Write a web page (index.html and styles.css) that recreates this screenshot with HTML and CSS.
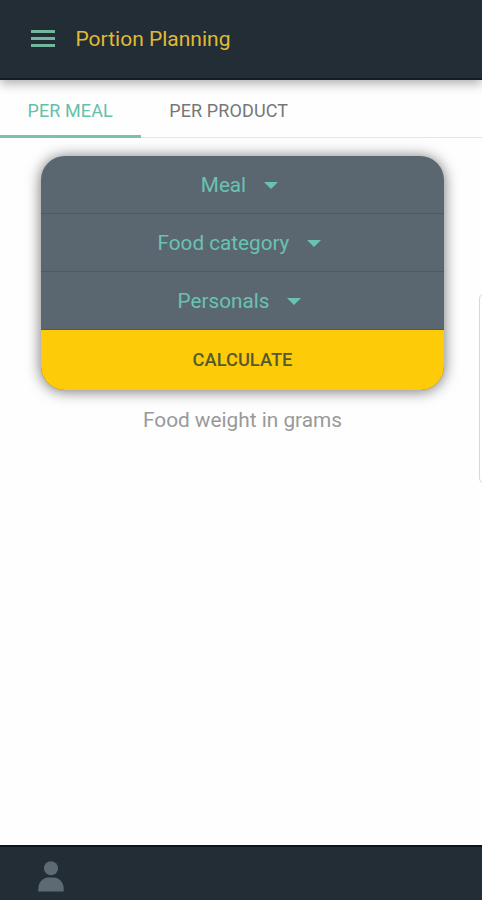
FILE: index.html
```
<!DOCTYPE html>
<html lang="en">
<head>
    <meta charset="UTF-8">
    <meta name="viewport" content="width=device-width, initial-scale=1.0">
    <title>Portion Planning</title>
    <link rel="stylesheet" href="styles.css">
</head>
<body>
    <header class="header">
        <button class="menu-btn" aria-label="Menu">
            <span></span>
            <span></span>
            <span></span>
        </button>
        <h1>Portion Planning</h1>
    </header>

    <nav class="tabs">
        <a class="tab active" href="#meal">PER MEAL</a>
        <a class="tab" href="#product">PER PRODUCT</a>
    </nav>

    <main class="content">
        <div class="card">
            <button class="select">Meal<i class="caret"></i></button>
            <button class="select">Food category<i class="caret"></i></button>
            <button class="select">Personals<i class="caret"></i></button>
            <button class="calculate">CALCULATE</button>
        </div>
        <p class="result">Food weight in grams</p>
        <div class="next-card"></div>
    </main>

    <footer class="footer">
        <svg class="user" viewBox="0 0 26 31" width="26" height="31">
            <circle cx="13" cy="7.2" r="7"/>
            <path d="M0.3 30.5V28C0.3 21 5 17 10 16.5H16C21 17 25.7 21 25.7 28V30.5Z"/>
        </svg>
    </footer>
</body>
</html>
```

FILE: styles.css
```
* {
    box-sizing: border-box;
}
body {
    margin: 0;
    height: 100vh;
    display: flex;
    flex-direction: column;
    overflow: hidden;
    background-color: #fefefe;
    font-family: Roboto, Arial, sans-serif;
}
button {
    border: 0;
    padding: 0;
    background: none;
    font-family: inherit;
    cursor: pointer;
}
.header {
    height: 80px;
    display: flex;
    align-items: center;
    padding: 0 31px 1px;
    background-color: #232d35;
    border-bottom: 2px solid #111c25;
    box-shadow: 0 4px 10px rgba(0, 0, 0, 0.3);
    z-index: 1;
}
.menu-btn {
    width: 24px;
    height: 17px;
    display: flex;
    flex-direction: column;
    justify-content: space-between;
    margin-right: 20.5px;
}
.menu-btn span {
    width: 100%;
    height: 3px;
    background-color: #71b79c;
}
h1 {
    margin: 0;
    color: #e0ba35;
    font-size: 21px;
    font-weight: 400;
}
.tabs {
    height: 58px;
    display: flex;
    border-bottom: 1px solid #e6e6e6;
}
.tab {
    height: 58px;
    display: flex;
    align-items: center;
    padding: 5px 28px 0 27.5px;
    border-bottom: 3px solid transparent;
    color: #777;
    font-size: 18px;
    letter-spacing: 0.1px;
    text-decoration: none;
}
.tab + .tab {
    padding-left: 28.5px;
}
.tab.active {
    color: #66bfa9;
    border-bottom-color: #78c3aa;
}
.content {
    flex: 1;
    position: relative;
    padding: 18px 38px 0 41px;
}
.card {
    border-radius: 24px;
    overflow: hidden;
    background-color: #5b6770;
    box-shadow: 0 1px 14px 1px rgba(0, 0, 0, 0.5);
}
.select {
    width: 100%;
    height: 58px;
    display: flex;
    align-items: center;
    justify-content: center;
    gap: 18px;
    padding: 1px 6px 0 0;
    border-bottom: 1px solid #4e5a62;
    color: #69c3b1;
    font-size: 20.7px;
}
.caret {
    border: 7px solid transparent;
    border-top-color: #69c3b1;
    border-bottom: 0;
}
.calculate {
    width: 100%;
    height: 60px;
    padding-bottom: 2px;
    background-color: #fecb09;
    color: #55592f;
    font-size: 18.3px;
    font-weight: 500;
}
.result {
    margin: 18px 0 0;
    color: #999;
    font-size: 20.8px;
    line-height: 24px;
    text-align: center;
}
.next-card {
    position: absolute;
    top: 155px;
    right: -20px;
    width: 23px;
    height: 191px;
    border: 1px solid #d8d8d8;
    border-radius: 6px;
}
.footer {
    height: 55px;
    padding: 14px 38px 0;
    background-color: #232d35;
    border-top: 2px solid #0c151c;
}
.user {
    display: block;
    fill: #5e6a73;
}
```
